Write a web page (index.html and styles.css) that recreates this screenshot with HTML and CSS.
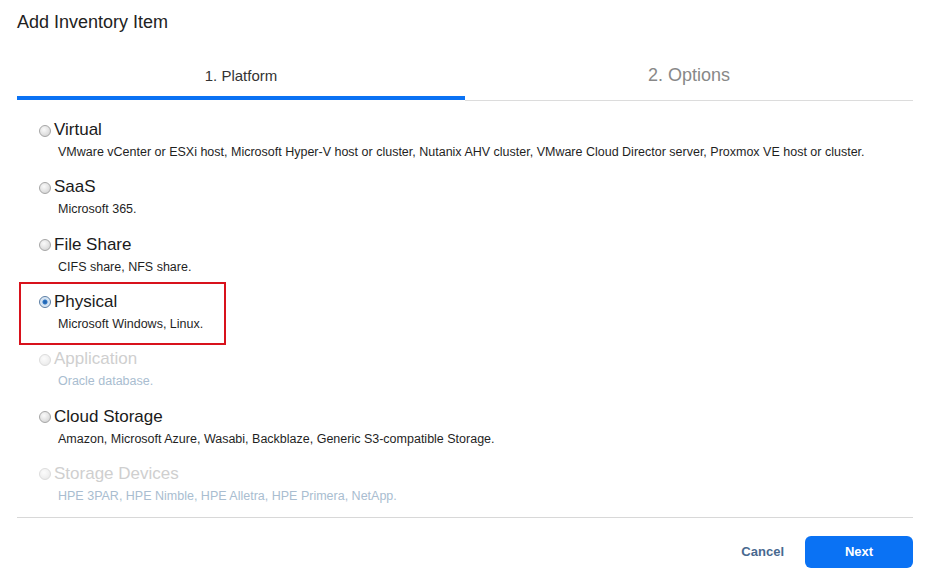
FILE: index.html
```html
<!DOCTYPE html>
<html lang="en">
<head>
    <meta charset="UTF-8">
    <title>Add Inventory Item</title>
    <link rel="stylesheet" href="styles.css">
</head>
<body>
    <div class="dialog">
        <h1>Add Inventory Item</h1>
        <div class="tabs">
            <div class="tab active">1. Platform</div>
            <div class="tab">2. Options</div>
        </div>
        <div class="options">
            <div class="option">
                <div class="option-title"><span class="radio"></span>Virtual</div>
                <div class="option-desc">VMware vCenter or ESXi host, Microsoft Hyper-V host or cluster, Nutanix AHV cluster, VMware Cloud Director server, Proxmox VE host or cluster.</div>
            </div>
            <div class="option">
                <div class="option-title"><span class="radio"></span>SaaS</div>
                <div class="option-desc">Microsoft 365.</div>
            </div>
            <div class="option">
                <div class="option-title"><span class="radio"></span>File Share</div>
                <div class="option-desc">CIFS share, NFS share.</div>
            </div>
            <div class="option highlight">
                <div class="option-title"><span class="radio checked"></span>Physical</div>
                <div class="option-desc">Microsoft Windows, Linux.</div>
            </div>
            <div class="option disabled">
                <div class="option-title"><span class="radio"></span>Application</div>
                <div class="option-desc">Oracle database.</div>
            </div>
            <div class="option">
                <div class="option-title"><span class="radio"></span>Cloud Storage</div>
                <div class="option-desc">Amazon, Microsoft Azure, Wasabi, Backblaze, Generic S3-compatible Storage.</div>
            </div>
            <div class="option disabled">
                <div class="option-title"><span class="radio"></span>Storage Devices</div>
                <div class="option-desc">HPE 3PAR, HPE Nimble, HPE Alletra, HPE Primera, NetApp.</div>
            </div>
        </div>
        <div class="footer">
            <button class="btn-cancel">Cancel</button>
            <button class="btn-next">Next</button>
        </div>
    </div>
</body>
</html>
```

FILE: styles.css
```css
body {
    margin: 0;
    font-family: "Liberation Sans", Arial, sans-serif;
    color: #222;
    background: #fff;
}
.dialog {
    padding: 0 14px 0 17px;
}
h1 {
    margin: 0;
    padding-top: 11px;
    font-size: 18px;
    line-height: 22px;
    font-weight: normal;
    color: #222;
}
.tabs {
    display: flex;
    align-items: flex-start;
}
.tab {
    flex: 1;
    box-sizing: border-box;
    text-align: center;
}
.tab.active {
    height: 67px;
    padding-top: 33px;
    font-size: 15px;
    line-height: 20px;
    color: #333;
    border-bottom: 4px solid #0a72f4;
}
.tab:not(.active) {
    height: 68px;
    padding-top: 31px;
    font-size: 18px;
    line-height: 22px;
    color: #888;
    border-bottom: 1px solid #dcdcdc;
}
.options {
    padding: 10px 0 4.7px;
    border-bottom: 1px solid #d8d8d8;
}
.option {
    position: relative;
    padding: 9px 0 8.33px 22px;
}
.option-title {
    display: flex;
    align-items: center;
    font-size: 17px;
    line-height: 20px;
    color: #1a1a1a;
}
.option-desc {
    margin: 4px 0 0 19px;
    font-size: 12.5px;
    line-height: 16px;
    color: #1f1f1f;
}
.radio {
    width: 10px;
    height: 10px;
    margin: 1px 3px 0 0;
    border: 1px solid #a6a6a6;
    border-radius: 50%;
    background: radial-gradient(circle at 40% 35%, #fafafa 0, #e2e2e2 55%, #c9c9c9 100%);
}
.radio.checked {
    border-color: #5a7da3;
    background: radial-gradient(circle, #1f5fa8 0, #2b74c4 28%, #cfe0f1 42%, #eef4fa 100%);
}
.option.disabled .option-title {
    color: #cfcfcf;
}
.option.disabled .option-desc {
    color: #a9bdd0;
}
.option.disabled .radio {
    border-color: #dcdcdc;
    background: radial-gradient(circle at 40% 35%, #fcfcfc 0, #efefef 60%, #e2e2e2 100%);
}
.option.highlight::after {
    content: "";
    position: absolute;
    top: -1px;
    left: 2px;
    width: 203px;
    height: 59px;
    border: 2px solid #d8121c;
}
.footer {
    display: flex;
    justify-content: flex-end;
    align-items: center;
    padding-top: 18px;
}
.footer button {
    font-family: inherit;
    font-size: 13px;
    font-weight: bold;
    border: none;
    cursor: pointer;
}
.btn-cancel {
    margin-right: 21px;
    padding: 0;
    background: none;
    color: #48698f;
}
.btn-next {
    width: 108px;
    height: 32px;
    border-radius: 6px;
    background: #0a72f4;
    color: #fff;
}
```
